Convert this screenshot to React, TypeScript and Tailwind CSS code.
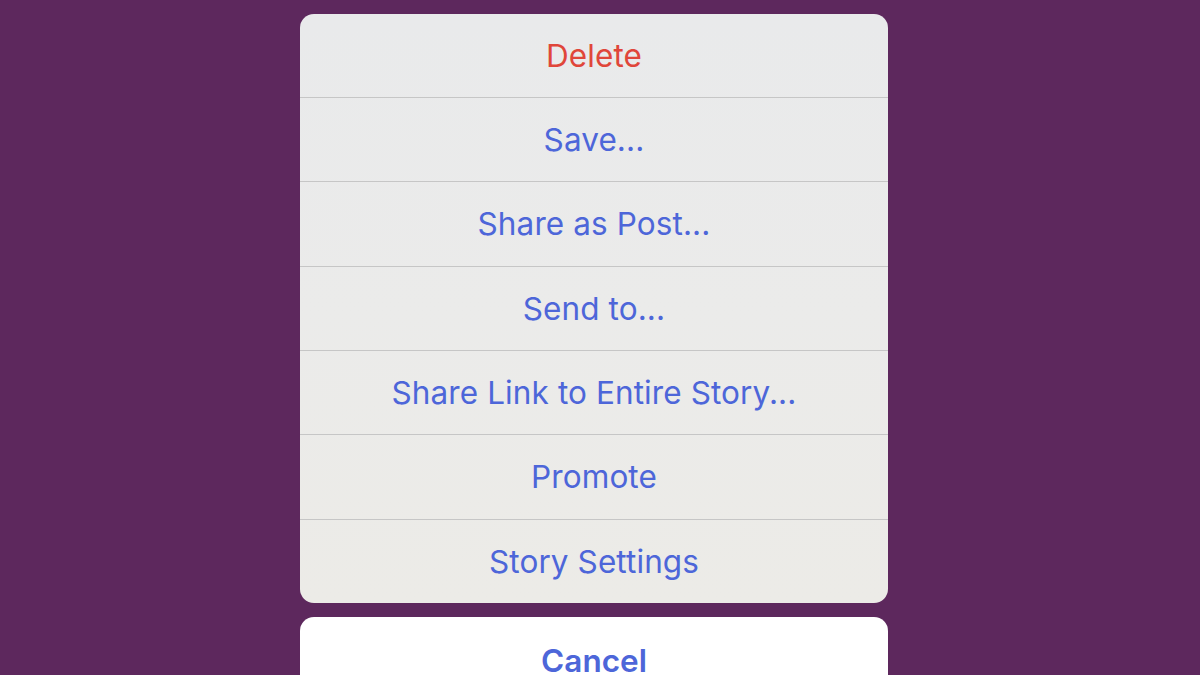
const actions = [
  { label: "Delete", danger: true },
  { label: "Save..." },
  { label: "Share as Post..." },
  { label: "Send to..." },
  { label: "Share Link to Entire Story..." },
  { label: "Promote" },
  { label: "Story Settings" },
];

export default function App() {
  return (
    <div className="h-[675px] w-[1200px] overflow-hidden bg-[#5d285d] font-['Inter',sans-serif]">
      <div className="ml-[300px] flex w-[588px] flex-col gap-[14px] pt-[14px]">
        <div className="overflow-hidden rounded-[14px] bg-gradient-to-b from-[#e9eaeb] via-[#ebebea] to-[#ecebe7]">
          {actions.map((a, i) => (
            <div
              key={a.label}
              className={`flex items-center justify-center text-[31.5px] tracking-[0.1px] ${
                i > 0 ? "h-[84.33px] border-t border-[#c6c6c6]" : "h-[83px]"
              } ${a.danger ? "text-[#e0463a]" : "text-[#4d66d9]"}`}
            >
              {a.label}
            </div>
          ))}
        </div>
        <div className="flex h-[84px] items-center justify-center rounded-[14px] bg-white pt-[4px] text-[31.5px] font-semibold text-[#4d66d9]">
          Cancel
        </div>
      </div>
    </div>
  );
}
